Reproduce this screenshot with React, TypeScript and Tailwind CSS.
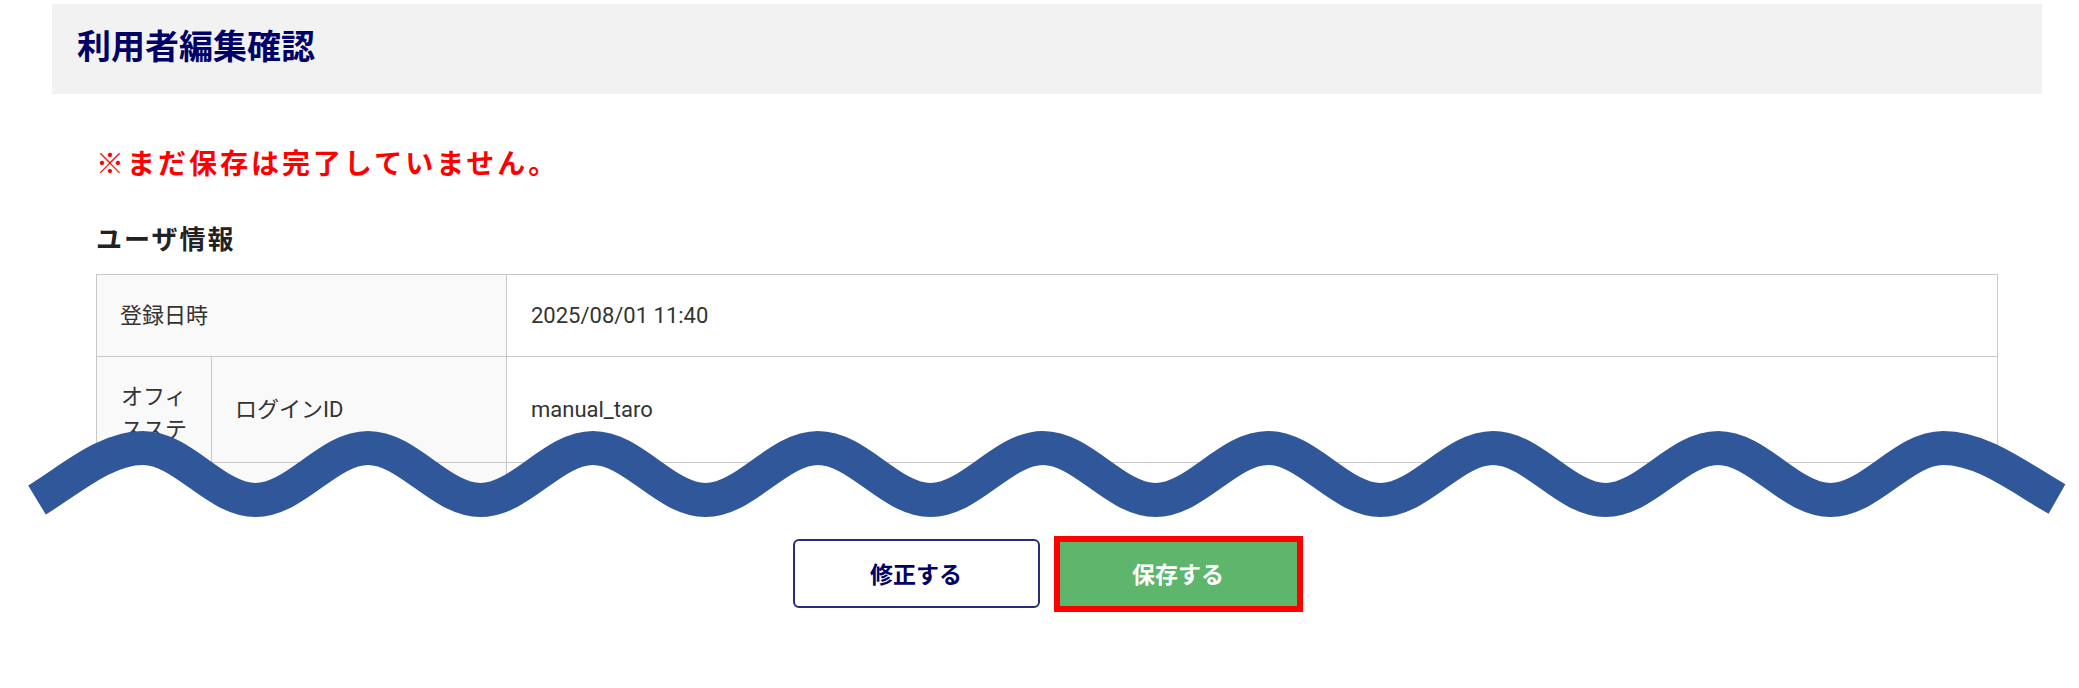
import React from "react";

function buildWave(): string {
  let d = "M37,500 C70,480 105,448 143,448";
  let x = 143;
  for (let i = 0; i < 16; i++) {
    const nx = x + 112.5;
    const y0 = i % 2 === 0 ? 448 : 500;
    const y1 = i % 2 === 0 ? 500 : 448;
    d += ` C${x + 40},${y0} ${nx - 40},${y1} ${nx},${y1}`;
    x = nx;
  }
  d += " C1983,448 2020,478 2057,499";
  return d;
}

export default function App() {
  const wave = buildWave();
  return (
    <div className="relative w-full min-h-[688px] bg-white pt-[4px] font-['Noto_Sans_CJK_JP',sans-serif]">
      <div className="ml-[52px] mr-[37px]">
        {/* Header */}
        <div className="h-[90px] bg-[#f2f2f2] pl-[25px] pt-[21px]">
          <h1 className="text-[34px] leading-[40px] font-bold text-[#000066]">利用者編集確認</h1>
        </div>

        <div className="px-[44px]">
          <p className="mt-[48px] text-[28px] leading-[40px] font-bold tracking-[3px] text-[#ff0000]">
            ※まだ保存は完了していません。
          </p>
          <h2 className="mt-[38px] text-[26px] leading-[36px] font-bold tracking-[2px] text-[#222222]">
            ユーザ情報
          </h2>

          <div className="mt-[18px] h-[256px] overflow-hidden">
            <div className="border border-[#c8c8c8] text-[22px] text-[#333333] font-['Roboto','Noto_Sans_CJK_JP',sans-serif]">
              {/* Row 1 */}
              <div className="flex h-[82px] border-b border-[#c8c8c8]">
                <div className="flex w-[410px] shrink-0 items-center border-r border-[#c8c8c8] bg-[#f9f9f9] pl-[23px]">
                  登録日時
                </div>
                <div className="flex flex-1 items-center pl-[24px]">2025/08/01 11:40</div>
              </div>
              {/* Group */}
              <div className="flex">
                <div className="w-[115px] shrink-0 border-r border-[#c8c8c8] bg-[#f9f9f9] pl-[24px] pr-[16px] pt-[23px] leading-[33px]">
                  オフィスステーション
                </div>
                <div className="flex flex-1 flex-col">
                  <div className="flex h-[106px] border-b border-[#c8c8c8]">
                    <div className="flex w-[295px] shrink-0 items-center border-r border-[#c8c8c8] bg-[#f9f9f9] pl-[23px]">
                      ログインID
                    </div>
                    <div className="flex flex-1 items-center pl-[24px]">manual_taro</div>
                  </div>
                  <div className="flex h-[106px] border-b border-[#c8c8c8]">
                    <div className="w-[295px] shrink-0 border-r border-[#c8c8c8] bg-[#f9f9f9]" />
                    <div className="flex-1" />
                  </div>
                </div>
              </div>
            </div>
          </div>
        </div>

        {/* Buttons */}
        <div className="mt-[9px] flex justify-center gap-[15px]">
          <button className="h-[69px] w-[247px] rounded-[6px] border-2 border-[#2a2a7a] bg-white text-[23px] font-bold text-[#000066]">
            修正する
          </button>
          <button className="relative h-[69px] w-[247px] bg-[#5db66c] text-[23px] font-bold text-white">
            保存する
            <span className="pointer-events-none absolute left-[-1px] right-[-1px] top-[-3px] bottom-[-4px] border-[6px] border-[#ff0000]" />
          </button>
        </div>
      </div>

      {/* Torn-edge wave overlay */}
      <svg
        className="pointer-events-none absolute left-0 top-0"
        width={2079}
        height={688}
        viewBox="0 0 2079 688"
      >
        <path d={`${wave} L2057,532 L37,532 Z`} fill="#ffffff" />
        <path d={wave} fill="none" stroke="#30579a" strokeWidth={34} strokeLinecap="butt" />
      </svg>
    </div>
  );
}
